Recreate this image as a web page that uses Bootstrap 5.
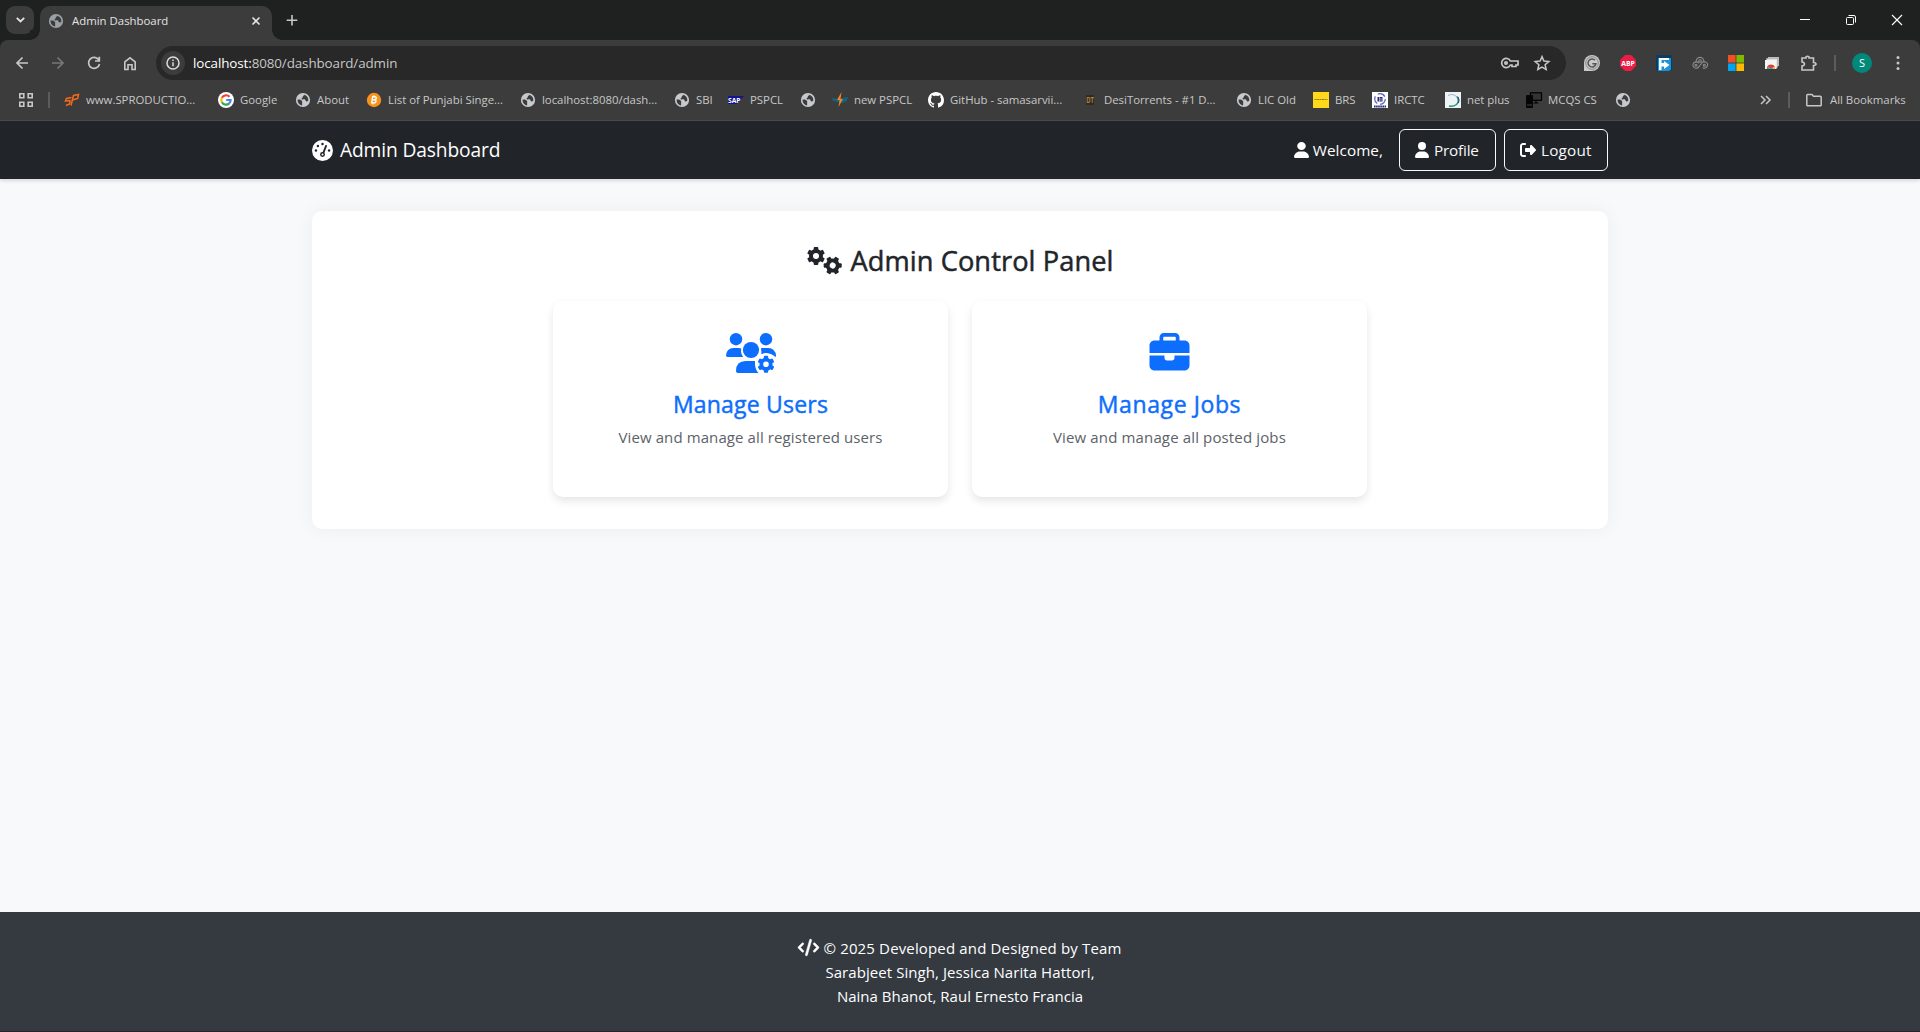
<!DOCTYPE html>
<html lang="en">
<head>
<meta charset="utf-8">
<title>Admin Dashboard</title>
<link href="https://cdn.jsdelivr.net/npm/bootstrap@5.3.0/dist/css/bootstrap.min.css" rel="stylesheet">
<style>
body{font-family:"Open Sans","Noto Sans",sans-serif;font-size:15px;line-height:24px;background:#f8f9fa;height:1032px;overflow:hidden}
svg{display:block;flex:none;overflow:visible}
.tabstrip{height:40px;background:#1f2120}
.tab-menu{width:28px;height:28px;border-radius:9px;background:#3c3c3c;margin:6px 6px 6px 6px}
.tab-open{width:232px;height:34px;margin-top:6px;background:#3c3c3c;border-radius:10px 10px 0 0;padding:0 10px 5px 8px;font-size:11.4px;letter-spacing:0;color:#e3e3e3}
.tab-open::before,.tab-open::after{content:"";position:absolute;bottom:0;width:10px;height:10px}
.tab-open::before{left:-10px;background:radial-gradient(circle at 0 0,#1f2120 9.5px,#3c3c3c 10px)}
.tab-open::after{right:-10px;background:radial-gradient(circle at 100% 0,#1f2120 9.5px,#3c3c3c 10px)}
.toolbar-row{height:45px;background:#3c3c3c;border-radius:8px 8px 0 0;color:#c7c7c7}
.tool-slot{width:36px;display:flex;justify-content:center;flex:none}
.omnibox{width:1410px;height:34px;border-radius:17px;background:#282828;margin-left:8px;padding-left:5px;padding-right:8px;font-size:13.4px;letter-spacing:-.1px;color:#c7c7c7}
.site-info{width:24px;height:24px;border-radius:50%;background:#3c3c3c;margin-right:8px}
.bookmark-row{height:36px;background:#3c3c3c;border-bottom:1px solid #4a4c4b;font-size:11.4px;letter-spacing:-.02px;color:#c7c7c7;padding-bottom:6px}
.bm{display:flex;align-items:center;gap:6px;flex:none;white-space:nowrap}
.sep{width:2px;height:16px;background:#5c5c5c;flex:none}
.avatar{width:20px;height:20px;border-radius:50%;background:#00897b;color:#fff;font-size:11px}
.site-nav{height:58px;background:#212529;box-shadow:0 2px 4px rgba(0,0,0,.13);padding:0}
.site-nav .navbar-brand{font-size:19.2px;line-height:30px;letter-spacing:-.13px;padding:0;gap:7px}
.nav-text{font-size:15.3px;letter-spacing:.05px}
.site-nav .btn{font-size:15.3px;line-height:24px;height:42px;padding:0 15px;border-radius:6px;letter-spacing:-.2px}
.site-nav .btn-logout{letter-spacing:.2px}
.panel{margin-top:32px;height:318px;background:#fff;border-radius:10px;padding:32px;box-shadow:0 0 20px rgba(0,0,0,.05)}
.panel h2{font-size:27.2px;line-height:34px;font-weight:500;letter-spacing:.1px;-webkit-text-stroke:.5px #212529;gap:9px;margin:1px 0 23px}
.panel h2 svg{-webkit-text-stroke:0}
.tile{width:395px;height:196px;border-radius:10px;background:#fff;box-shadow:0 4px 8px rgba(0,0,0,.1);padding-top:32px}
.tile h4{font-size:23px;line-height:29px;font-weight:500;letter-spacing:.2px;color:#0d6efd;-webkit-text-stroke:.45px #0d6efd;margin:17px 0 6px}
.tile .title-jobs{letter-spacing:.6px}
.tile p{color:#5c6268;letter-spacing:.1px;margin:0}
.tile .desc-jobs{letter-spacing:.14px}
.site-foot{height:120px;background:#343a40;color:#fff;border-bottom:1px solid #2a2228;padding-top:24px}
.foot-line{letter-spacing:.07px}
.foot-line-first{letter-spacing:.15px}
</style>
<script src="https://cdn.jsdelivr.net/npm/bootstrap@5.3.0/dist/js/bootstrap.bundle.min.js"></script>
</head>
<body class="d-flex flex-column">
<svg width="0" height="0" class="position-absolute">
<defs>
<symbol id="globe" viewBox="0 0 16 16"><circle cx="8" cy="8" r="7.1"/><path d="M2.600 7.600c1.800-.3 3.300.2 4.200 1.200 1 1.100 0 2 .4 3l-.1 1.700C4.400 13.200 2.400 11 2.600 7.600zM9.500 2.700c-.2 1-1.200.8-1.600 1.500-.3.700.1 1.200-.6 1.600-.7.3-1 .8-.4 1.400.8.500 2.400-.3 3.300.5.600.6.300 1.300 1 1.700.6.300 1.400-.3 2.100-.6.300-2.800-1.200-5.200-3.800-6.100z" fill="#3c3c3c"/></symbol>
<g id="tooth"><rect x="-2.300" y="-9" width="4.600" height="4" rx="1"/></g>
<g id="gear"><circle r="5" fill="none" stroke="currentColor" stroke-width="4"/><use href="#tooth"/><use href="#tooth" transform="rotate(60)"/><use href="#tooth" transform="rotate(120)"/><use href="#tooth" transform="rotate(180)"/><use href="#tooth" transform="rotate(240)"/><use href="#tooth" transform="rotate(300)"/></g>
<symbol id="person" viewBox="0 0 448 512"><path d="M224 256A128 128 0 1 0 224 0a128 128 0 1 0 0 256zm-45.700 48C79.800 304 0 383.800 0 482.300C0 498.700 13.300 512 29.700 512H418.300c16.400 0 29.700-13.300 29.700-29.700C448 383.800 368.200 304 269.700 304H178.300z"/></symbol>
</defs>
</svg>

<header>
<div class="tabstrip d-flex align-items-start">
  <div class="tab-menu d-flex align-items-center justify-content-center"><svg width="9" height="6" viewBox="0 0 9 6" fill="none" stroke="#e3e3e3" stroke-width="1.800"><path d="M.8.8l3.700 3.700L8.200.8"/></svg></div>
  <div class="tab-open position-relative d-flex align-items-center">
    <svg width="16" height="16" fill="#9aa0a6"><use href="#globe"/></svg><span class="ms-2 flex-grow-1">Admin Dashboard</span>
    <svg width="10" height="10" viewBox="0 0 10 10" stroke="#e3e3e3" stroke-width="1.600" style="margin-right:1px"><path d="M1.500 1.500l7 7m0-7l-7 7"/></svg>
  </div>
  <svg class="mt-3" style="margin-left:14px" width="12" height="12" viewBox="0 0 12 12" stroke="#c7c7c7" stroke-width="1.600"><path d="M6 -1v10.500M.7 4.200h10.600"/></svg>
  <div class="ms-auto d-flex align-items-center gap-0" style="height:40px">
    <svg width="46" height="40" viewBox="0 0 46 40" stroke="#fff"><path d="M18 19.500h10"/></svg>
    <svg width="46" height="40" viewBox="0 0 46 40" stroke="#fff" fill="none"><rect x="18.500" y="17.500" width="7" height="7" rx="1"/><path d="M20.500 15.500h5.500q1.500 0 1.500 1.500v5.500"/></svg>
    <svg width="46" height="40" viewBox="0 0 46 40" stroke="#fff" stroke-width="1.100"><path d="M18 15l10 10m0-10L18 25"/></svg>
  </div>
</div>
<div style="background:#1f2120">
<div class="toolbar-row d-flex align-items-center" style="padding:2px 0 1px 4px">
  <div class="tool-slot"><svg width="14" height="14" viewBox="0 0 14 14" fill="none" stroke="#c7c7c7" stroke-width="1.700"><path d="M13 7H2m5.500-5.500L2 7l5.500 5.500"/></svg></div>
  <div class="tool-slot"><svg width="14" height="14" viewBox="0 0 14 14" fill="none" stroke="#777" stroke-width="1.700"><path d="M1 7h11M6.500 1.500L12 7l-5.500 5.500"/></svg></div>
  <div class="tool-slot"><svg width="14" height="14" viewBox="0 0 14 14" fill="none" stroke="#c7c7c7" stroke-width="1.700"><path d="M11.800 4A5.500 5.500 0 1 0 12.500 8M12.300.8v4.200H8"/></svg></div>
  <div class="tool-slot"><svg width="14" height="15" viewBox="0 0 14 15" fill="none" stroke="#c7c7c7" stroke-width="1.600"><path d="M1.800 13.500V6L7 1.800 12.200 6v7.500H9V8.800H5v4.700z"/></svg></div>
  <div class="omnibox d-flex align-items-center">
    <div class="site-info d-flex align-items-center justify-content-center"><svg width="14" height="14" viewBox="0 0 14 14"><circle cx="7" cy="7" r="6" fill="none" stroke="#dcdcdc" stroke-width="1.500"/><path d="M7 6.300v4M7 3.600v1.500" stroke="#dcdcdc" stroke-width="1.500"/></svg></div>
    <span class="flex-grow-1"><span style="color:#fff">localhost:</span>8080/dashboard/admin</span>
    <svg width="18" height="12" viewBox="0 0 18 12" fill="none" stroke="#c7c7c7" stroke-width="1.700" style="margin-right:15px"><path d="M9.400 4A4.600 4.600 0 1 0 9.400 8H11v1.500h4V8h2V4z"/><circle cx="5" cy="6" r="1.200"/></svg>
    <svg width="16" height="16" viewBox="0 0 16 16" fill="none" stroke="#c7c7c7" stroke-width="1.500" class="me-2"><path d="M8 1.600l1.900 4.500 4.900.4-3.700 3.200 1.100 4.800L8 12l-4.200 2.500 1.100-4.800L1.200 6.500l4.900-.4z"/></svg>
  </div>
  <div class="tool-slot" style="margin-left:8px"><svg width="16" height="16" viewBox="0 0 16 16"><path d="M8 0a8 8 0 0 1 0 16H0V8a8 8 0 0 1 8-8z" fill="#c9c9c9"/><circle cx="8" cy="8" r="6.300" fill="none" stroke="#777" stroke-width=".8"/><path d="M11 5.200A4 4 0 1 0 12 8.700H8.300" fill="none" stroke="#555" stroke-width="1.500"/></svg></div>
  <div class="tool-slot"><svg width="16" height="16" viewBox="0 0 16 16"><path d="M5 0h6l5 5v6l-5 5H5l-5-5V5z" fill="#ed1c45"/><text x="1.200" y="10.500" font-size="7" font-weight="700" letter-spacing="0" fill="#fff" textLength="13.600" lengthAdjust="spacingAndGlyphs">ABP</text></svg></div>
  <div class="tool-slot"><svg width="16" height="16" viewBox="0 0 16 16"><rect width="16" height="16" rx="2" fill="#0b3d63"/><path d="M2 3h13v11.500L13 16H2z" fill="#1b93d8"/><path d="M3 3h10v2H5.500v3H8V6l5.500 4L8 14v-2.500H5.500V15H3z" fill="#fff"/></svg></div>
  <div class="tool-slot"><svg width="16" height="16" viewBox="0 0 16 16" fill="none" stroke="#8d8d8d" stroke-width="1.100"><path d="M4.300 7.500a3.900 3.900 0 1 1 7.400 0M6.800 8.300a3.200 3.200 0 1 0-.6 4.200l4-5M9.500 8.300a3.200 3.200 0 1 1 1.200 4.400"/><circle cx="4" cy="10.300" r="1"/><circle cx="8" cy="6" r="1.300"/><circle cx="12.300" cy="10.300" r="1"/></svg></div>
  <div class="tool-slot"><svg width="16" height="16" viewBox="0 0 16 16"><path d="M0 0h7.600v7.600H0z" fill="#f25022"/><path d="M8.400 0H16v7.600H8.400z" fill="#7fba00"/><path d="M0 8.400h7.600V16H0z" fill="#00a4ef"/><path d="M8.400 8.400H16V16H8.400z" fill="#ffb900"/></svg></div>
  <div class="tool-slot"><svg width="16" height="16" viewBox="0 0 16 16"><rect x="4" y="2" width="11" height="9" fill="#bbb"/><rect x="2.500" y="3.500" width="11" height="9" fill="#ddd" stroke="#aaa" stroke-width=".5"/><rect x="1" y="5" width="11.500" height="9" fill="#f4f4f4"/><path d="M2.800 14a4.200 4.200 0 0 1 .6-2.600L6 14z" fill="#2fa84f"/><path d="M3.200 11.800a4.200 4.200 0 0 1 7.600 0L8.500 13h-3z" fill="#e33b2e"/><path d="M11.200 14a4.200 4.200 0 0 0-.5-2.200L8 13v1z" fill="#fbbc05"/><path d="M5.300 14a1.700 1.700 0 0 1 3.400 0z" fill="#4285f4"/></svg></div>
  <div class="tool-slot"><svg width="17" height="17" viewBox="0 0 17 17" fill="none" stroke="#c7c7c7" stroke-width="1.600"><path d="M2 3h4V1.800q1.500-1.200 3 0V3h4.500v4.500q2.500.2 2.500 1.500t-2.500 1.500V15H2v-4q2.500-.4 2.500-2T2 7z"/></svg></div>
  <div class="sep" style="margin-left:8px"></div>
  <div class="avatar d-flex align-items-center justify-content-center" style="margin-left:16px">S</div>
  <svg style="margin-left:24px" width="4" height="16" viewBox="0 0 4 16" fill="#c7c7c7"><circle cx="2" cy="2.500" r="1.500"/><circle cx="2" cy="8" r="1.500"/><circle cx="2" cy="13.500" r="1.500"/></svg>
</div>
</div>
<div class="bookmark-row d-flex align-items-center">
  <svg style="margin-left:19px" width="14" height="14" viewBox="0 0 14 14" fill="none" stroke="#c7c7c7" stroke-width="1.600"><path d="M.8.8h4v4h-4zM9.200.8h4v4h-4zM.8 9.200h4v4h-4zM9.200 9.200h4v4h-4z"/></svg>
  <div class="sep" style="margin:0 14px 0 15px"></div>
  <div class="bm" style="width:154px"><svg width="16" height="16" viewBox="0 0 16 16" fill="none" stroke="#f26a1b" stroke-width="1.500"><path d="M7.500 5.500L2.500 6.500 1.500 9l4.500-.5-.5 3.500L2 13.500M7 13.500L9.500 3.500l5-1-.8 4L8.500 8"/></svg><span>www.SPRODUCTIO...</span></div>
  <div class="bm" style="width:77px"><svg width="16" height="16" viewBox="0 0 16 16" fill="none" stroke-width="2.200"><circle cx="8" cy="8" r="8" fill="#fff"/><path d="M11.500 4.800A4.700 4.700 0 0 0 3.900 5.700" stroke="#ea4335"/><path d="M3.900 5.700a4.700 4.700 0 0 0 0 4.600" stroke="#fbbc05"/><path d="M3.900 10.300a4.700 4.700 0 0 0 7.300 1.100" stroke="#34a853"/><path d="M11.200 11.400A4.500 4.500 0 0 0 12.600 8H8.200" stroke="#4285f4"/></svg><span>Google</span></div>
  <div class="bm" style="width:71px"><svg width="16" height="16" fill="#c7cacd"><use href="#globe"/></svg><span>About</span></div>
  <div class="bm" style="width:154px"><svg width="16" height="16" viewBox="0 0 16 16"><circle cx="8" cy="8" r="7.200" fill="#f7931a"/><path d="M6.700 4.500L5.700 11M6 4.700h2.600q2 .2 1.700 1.700T8 7.700H6.500M8 7.700q2.300.2 2 1.800t-2.500 1.400H5M8 3.400l-.2 1M7 11l-.2 1.400" fill="none" stroke="#fff" stroke-width="1.400"/></svg><span>List of Punjabi Singe...</span></div>
  <div class="bm" style="width:154px"><svg width="16" height="16" fill="#c7cacd"><use href="#globe"/></svg><span>localhost:8080/dash...</span></div>
  <div class="bm" style="width:54px"><svg width="16" height="16" fill="#c7cacd"><use href="#globe"/></svg><span>SBI</span></div>
  <div class="bm" style="width:72px"><svg width="16" height="16" viewBox="0 0 16 16"><path d="M0 4h16l-7 8H0z" fill="#14148c"/><text x="0" y="10.800" font-size="7" font-weight="700" letter-spacing="0" fill="#fff" textLength="12.500" lengthAdjust="spacingAndGlyphs">SAP</text></svg><span>PSPCL</span></div>
  <div class="bm" style="width:32px"><svg width="16" height="16" fill="#c7cacd"><use href="#globe"/></svg></div>
  <div class="bm" style="width:96px"><svg width="16" height="16" viewBox="0 0 16 16"><path d="M0 6l6 1 4-1 6-1-1 4-5 2-4-1-5-1z" fill="#14627e"/><path d="M9.500 0L5 8h2.500L6.500 15 11 7H8.500z" fill="#f58220"/></svg><span>new PSPCL</span></div>
  <div class="bm" style="width:154px"><svg width="16" height="16" viewBox="0 0 16 16" fill="#fff"><path d="M8 0C3.580 0 0 3.580 0 8c0 3.540 2.290 6.530 5.470 7.590.4.070.55-.17.55-.38 0-.19-.01-.82-.01-1.490-2.010.37-2.530-.49-2.690-.94-.09-.23-.48-.94-.82-1.130-.28-.15-.68-.52-.01-.53.63-.01 1.080.58 1.230.82.72 1.210 1.870.87 2.330.66.07-.52.28-.87.51-1.070-1.780-.2-3.640-.89-3.640-3.950 0-.87.31-1.590.82-2.150-.08-.2-.36-1.020.08-2.120 0 0 .67-.21 2.200.82.64-.18 1.320-.27 2-.27s1.360.09 2 .27c1.530-1.040 2.200-.82 2.200-.82.44 1.100.16 1.920.08 2.120.51.56.82 1.270.82 2.150 0 3.070-1.870 3.750-3.650 3.950.29.25.54.73.54 1.480 0 1.070-.01 1.930-.01 2.200 0 .21.15.46.55.38A8 8 0 0 0 16 8c0-4.420-3.580-8-8-8z"/></svg><span>GitHub - samasarvii...</span></div>
  <div class="bm" style="width:154px"><svg width="16" height="16" viewBox="0 0 16 16"><rect x="4" y="3" width="8" height="10" fill="#332a1c"/><text x="4.200" y="11" font-size="8" font-weight="700" letter-spacing="0" fill="#a8834a" textLength="7.600" lengthAdjust="spacingAndGlyphs">DT</text></svg><span>DesiTorrents - #1 D...</span></div>
  <div class="bm" style="width:77px"><svg width="16" height="16" fill="#c7cacd"><use href="#globe"/></svg><span>LIC Old</span></div>
  <div class="bm" style="width:59px"><svg width="16" height="16" viewBox="0 0 16 16"><path d="M0 0h16v16H0z" fill="#ffd91a"/><path d="M1.500 7.500h13" stroke="#8c7a1c" stroke-dasharray="2 .5"/></svg><span>BRS</span></div>
  <div class="bm" style="width:73px"><svg width="16" height="16" viewBox="0 0 16 16"><path d="M0 0h16v16H0z" fill="#fff"/><circle cx="8" cy="7" r="5.300" fill="none" stroke="#6067bd" stroke-width="1.300" stroke-dasharray="8 3"/><path d="M5.500 5h5v4.500h-5z" fill="#25257f"/><path d="M7.500 5v4.500M9 6v3" stroke="#fff" stroke-width=".6"/><path d="M2 14.500h12" stroke="#25257f" stroke-width="1.800" stroke-dasharray="1.600 .5"/></svg><span>IRCTC</span></div>
  <div class="bm" style="width:81px"><svg width="16" height="16" viewBox="0 0 16 16"><path d="M0 0h16v16H0z" fill="#edf4f6"/><path d="M3 3.500Q8 1 12 5" fill="none" stroke="#9ab" stroke-width=".9"/><path d="M12 4.500Q15 9 11.500 12.500 8 15 4 14" fill="none" stroke="#2f8f78" stroke-width="1.500"/><path d="M13 5q2 3 .4 6" fill="none" stroke="#394487"/></svg><span>net plus</span></div>
  <div class="bm" style="width:89px"><svg width="16" height="16" viewBox="0 0 16 16"><rect x="4.500" y=".8" width="11" height="7.500" fill="#333" stroke="#000" stroke-width="1.200"/><path d="M10 8v3M7.500 11h5" stroke="#000" stroke-width="1.200"/><rect x="0" y="3" width="7" height="13" rx="1" fill="#050505"/><path d="M1 13h5" stroke="#444"/></svg><span>MCQS CS</span></div>
  <div class="bm" style="width:145px"><svg width="16" height="16" fill="#c7cacd"><use href="#globe"/></svg></div>
  <svg width="11" height="10" viewBox="0 0 11 10" fill="none" stroke="#c7c7c7" stroke-width="1.500"><path d="M1 1l4 4-4 4M6 1l4 4-4 4"/></svg>
  <div class="sep" style="margin:0 16px 0 17px"></div>
  <div class="bm" style="gap:8px"><svg width="16" height="14" viewBox="0 0 16 14" fill="none" stroke="#c7c7c7" stroke-width="1.500"><path d="M.8 2.500V12q0 .8.800.8h12.800q.8 0 .8-.8V4q0-.8-.8-.8H7.500L6 1.500H1.600q-.8 0-.8 1z"/></svg><span>All Bookmarks</span></div>
</div>
</header>

<nav class="site-nav navbar navbar-dark flex-shrink-0">
  <div class="container">
    <a class="navbar-brand d-flex align-items-center m-0" href="#">
      <svg width="21" height="21" viewBox="0 0 512 512"><circle cx="256" cy="256" r="256" fill="#fff"/><g fill="#212529"><circle cx="256" cy="96" r="30"/><circle cx="144" cy="144" r="30"/><circle cx="96" cy="256" r="30"/><circle cx="416" cy="256" r="30"/><circle cx="256" cy="352" r="60"/></g><path d="M268 335L343 144" stroke="#212529" stroke-width="46" stroke-linecap="round"/><circle cx="256" cy="352" r="24" fill="#fff"/></svg>
      <span>Admin Dashboard</span></a>
    <div class="d-flex align-items-center text-white">
      <span class="nav-text d-flex align-items-center me-3" style="gap:4px"><svg width="15" height="16" viewBox="0 0 448 512" preserveAspectRatio="none" fill="#fff" style="margin-top:-1px"><use href="#person" width="448" height="512"/></svg>Welcome,</span>
      <a class="btn btn-outline-light d-flex align-items-center me-2" style="gap:5px;width:97px" href="#"><svg width="14" height="16" fill="#fff" style="margin-top:-1px"><use href="#person"/></svg>Profile</a>
      <a class="btn btn-logout btn-outline-light d-flex align-items-center" style="gap:5px;width:104px" href="#"><svg width="16" height="16" viewBox="0 0 512 512" fill="#fff" style="margin-top:-1px"><path d="M377.900 105.900L500.700 228.700c7.200 7.200 11.300 17.100 11.300 27.300s-4.100 20.100-11.300 27.300L377.900 406.100c-6.400 6.400-15 9.900-24 9.900c-18.700 0-33.900-15.200-33.900-33.900l0-62.100-128 0c-17.700 0-32-14.300-32-32l0-64c0-17.700 14.300-32 32-32l128 0 0-62.100c0-18.700 15.200-33.900 33.900-33.900c9 0 17.600 3.600 24 9.900zM160 96L96 96c-17.700 0-32 14.300-32 32l0 256c0 17.700 14.300 32 32 32l64 0c17.700 0 32 14.300 32 32s-14.300 32-32 32l-64 0c-53 0-96-43-96-96L0 128C0 75 43 32 96 32l64 0c17.700 0 32 14.300 32 32s-14.300 32-32 32z"/></svg>Logout</a>
    </div>
  </div>
</nav>

<main class="container flex-grow-1">
  <section class="panel">
    <h2 class="d-flex align-items-center justify-content-center">
      <svg width="35" height="28" viewBox="0 0 35 28" style="color:#212529;fill:#212529"><use href="#gear" x="9" y="9"/><use href="#gear" transform="translate(25.700 18.500) rotate(30)"/></svg>
      <span>Admin Control Panel</span></h2>
    <div class="d-flex justify-content-center gap-4">
      <div class="tile d-flex flex-column align-items-center">
        <svg width="50" height="40" viewBox="0 0 50 40" fill="#0d6efd" style="color:#0d6efd"><circle cx="10" cy="6.200" r="6.200"/><path d="M0 22.300A7.300 7.300 0 0 1 7.500 15H13q1.200 0 2.200.4-.8 5 2 8.600H1.500Q0 24 0 22.300z"/><circle cx="40" cy="6.200" r="6.200"/><circle cx="25" cy="17" r="8.100"/><path d="M10 38q0-10 9.700-10H28.500q.5 0 .5 1-.4 7 3.500 11H12q-2 0-2-2z"/><circle cx="40" cy="31.300" r="10.500" fill="#fff"/><path d="M35 15H42.500A7.500 7.500 0 0 1 50 22.500q0 1-.6 1.500-3.400-3.300-9-3.900-2.500-.3-5 1.200.1-3.500-.4-6.300z"/><use href="#gear" transform="translate(40 31.300) scale(.94)"/></svg>
        <h4>Manage Users</h4><p>View and manage all registered users</p>
      </div>
      <div class="tile d-flex flex-column align-items-center">
        <svg width="41" height="40" viewBox="0 0 512 512" fill="#0d6efd"><path d="M184 48H328c4.400 0 8 3.600 8 8V96H176V56c0-4.400 3.600-8 8-8zm-56 8V96H64C28.700 96 0 124.700 0 160v96H192 320 512V160c0-35.300-28.700-64-64-64H384V56c0-30.900-25.100-56-56-56H184c-30.900 0-56 25.100-56 56zM512 288H320v32c0 17.700-14.300 32-32 32H224c-17.700 0-32-14.300-32-32V288H0V416c0 35.300 28.700 64 64 64H448c35.300 0 64-28.700 64-64V288z"/></svg>
        <h4 class="title-jobs">Manage Jobs</h4><p class="desc-jobs">View and manage all posted jobs</p>
      </div>
    </div>
  </section>
</main>

<footer class="site-foot flex-shrink-0 d-flex flex-column align-items-center">
  <div class="foot-line foot-line-first d-flex align-items-center" style="gap:4px"><svg width="21" height="17" viewBox="0 0 640 512" fill="#fff" stroke="#fff" stroke-width="14" style="margin-top:-1px"><path d="M392.800 1.200c-17-4.900-34.700 5-39.600 22l-128 448c-4.900 17 5 34.700 22 39.600s34.700-5 39.600-22l128-448c4.900-17-5-34.700-22-39.600zm80.600 120.100c-12.500 12.500-12.500 32.800 0 45.300L562.700 256l-89.400 89.400c-12.500 12.500-12.500 32.800 0 45.300s32.800 12.500 45.300 0l112-112c12.500-12.500 12.500-32.800 0-45.300l-112-112c-12.500-12.500-32.800-12.500-45.300 0zm-306.700 0c-12.500-12.500-32.800-12.500-45.300 0l-112 112c-12.500 12.500-12.500 32.800 0 45.300l112 112c12.500 12.500 32.800 12.500 45.300 0s12.500-32.800 0-45.300L77.300 256l89.400-89.400c12.500-12.500 12.500-32.800 0-45.300z"/></svg><span>© 2025 Developed and Designed by Team</span></div>
  <div class="foot-line">Sarabjeet Singh, Jessica Narita Hattori,</div>
  <div class="foot-line" style="letter-spacing:0">Naina Bhanot, Raul Ernesto Francia</div>
</footer>
</body>
</html>
